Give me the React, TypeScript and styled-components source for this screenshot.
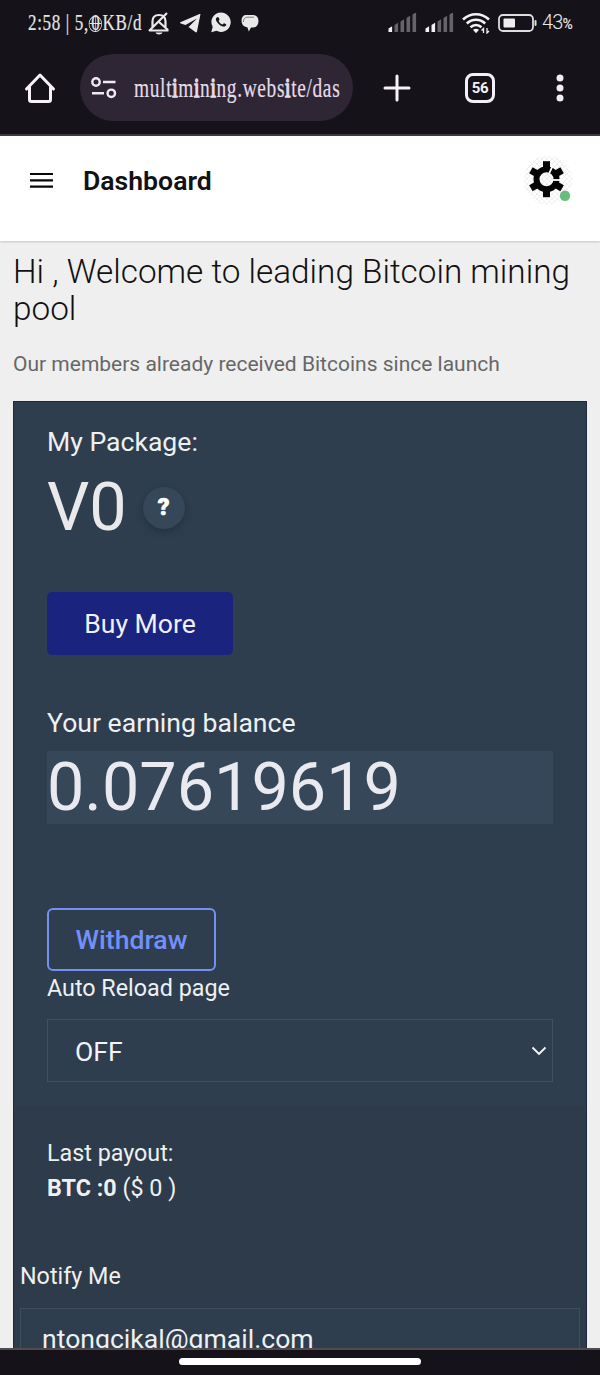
import React from "react";
import styled, { createGlobalStyle } from "styled-components";

const GlobalStyle = createGlobalStyle`
  * { box-sizing: border-box; }
  html, body { margin: 0; padding: 0; background: #efefef; }
  body { font-family: Roboto, "Liberation Sans", sans-serif; }
`;

const Screen = styled.div`
  width: 600px;
  height: 1375px;
  display: flex;
  flex-direction: column;
  overflow: hidden;
  background: #efefef;
`;

const Chrome = styled.div`
  height: 136px;
  flex: none;
  background: #151219;
  border-bottom: 2px solid #3d3b40;
`;

const StatusBar = styled.div`
  height: 45px;
  padding: 0 28px;
  display: flex;
  align-items: center;
  justify-content: space-between;
`;

const StatusGroup = styled.div<{ $gap: number }>`
  display: flex;
  align-items: center;
  gap: ${(p) => p.$gap}px;
`;

const NarrowBox = styled.div<{ $width: number }>`
  width: ${(p) => p.$width}px;
  flex: none;
  white-space: nowrap;
`;

const NarrowText = styled.span<{ $size: number; $scale: number; $color: string }>`
  display: inline-block;
  transform: scaleX(${(p) => p.$scale});
  transform-origin: left center;
  font-family: "Liberation Serif", serif;
  font-size: ${(p) => p.$size}px;
  line-height: 30px;
  letter-spacing: 0.9px;
  color: ${(p) => p.$color};
  -webkit-text-stroke: 0.2px ${(p) => p.$color};
`;

const Ornate = styled.span`
  -webkit-text-stroke: 1.5px #e6dbe8;
`;

const OrnateZero = styled.span`
  position: relative;
  margin: 0 3px;
  &::after {
    content: "";
    position: absolute;
    left: -3px;
    right: -2px;
    top: 6px;
    height: 14px;
    border: 1px solid #e5e5e5;
    border-radius: 50%;
    background: linear-gradient(#e5e5e5, #e5e5e5) center / 100% 1px no-repeat,
      linear-gradient(#e5e5e5, #e5e5e5) center / 1px 100% no-repeat;
  }
`;

const BatteryLabel = styled.div`
  display: flex;
  align-items: baseline;
  font: 300 20px/30px Roboto, sans-serif;
  letter-spacing: -0.8px;
  color: #e9e9e9;
  small {
    font-size: 14px;
    font-weight: 500;
  }
`;

const Toolbar = styled.div`
  height: 89px;
  padding: 9px 18px 0 24px;
  display: flex;
  align-items: flex-start;
`;

const ToolSlot = styled.div<{ $width: number }>`
  width: ${(p) => p.$width}px;
  height: 67px;
  display: flex;
  align-items: center;
  justify-content: center;
  flex: none;
`;

const AddressPill = styled.div`
  width: 273px;
  height: 67px;
  margin-left: 24px;
  margin-right: 22px;
  padding-left: 11px;
  border-radius: 34px;
  background: #2e2635;
  display: flex;
  align-items: center;
  gap: 17px;
  flex: none;
`;

const TabCount = styled.div`
  width: 30px;
  height: 30px;
  border: 3px solid #f5eff7;
  border-radius: 8px;
  display: flex;
  align-items: center;
  justify-content: center;
  font: 700 15px/24px Roboto, sans-serif;
  letter-spacing: -0.3px;
  color: #f5eff7;
`;

const PageHeader = styled.header`
  height: 105px;
  flex: none;
  padding: 0 24px 15px 30px;
  display: flex;
  align-items: center;
  background: #fff;
  box-shadow: 0 1px 2px rgba(0, 0, 0, 0.18);
  z-index: 1;
`;

const HeaderTitle = styled.div`
  margin-left: 30px;
  flex: 1;
  font-size: 26.6px;
  font-weight: 600;
  line-height: 30px;
  color: #111213;
`;

const Main = styled.main`
  flex: 1;
  min-height: 0;
  overflow: hidden;
  padding: 12px 13px 0;
`;

const Welcome = styled.h1`
  margin: 0;
  font-size: 33.3px;
  font-weight: 300;
  line-height: 37px;
  color: #111;
`;

const Lead = styled.p`
  margin: 22px 0 0;
  font-size: 21px;
  line-height: 30px;
  color: #676767;
`;

const Card = styled.section`
  height: 980px;
  margin-top: 22px;
  border: 1px solid #1c2b3b;
  background: #2f3e4e;
`;

const PackagePanel = styled.div`
  height: 704px;
  padding: 24px 33px 0;
`;

const PayoutPanel = styled.div`
  height: 275px;
  background: #2d3b4a;
  padding-top: 30px;
`;

const Label = styled.div<{ $size: number; $line: number }>`
  font-size: ${(p) => p.$size}px;
  line-height: ${(p) => p.$line}px;
  color: #eef0f2;
`;

const PackageRow = styled.div`
  height: 90px;
  padding-top: 7px;
  display: flex;
  align-items: center;
  gap: 18px;
`;

const BigValue = styled.div`
  font-size: 66.5px;
  line-height: 72px;
  color: #e9e9ec;
`;

const HelpButton = styled.button`
  width: 42px;
  height: 42px;
  margin: 3px 0 0 -2px;
  padding: 0;
  border: 0;
  border-radius: 50%;
  background: #36475a;
  box-shadow: 0 3px 7px rgba(10, 20, 30, 0.3);
  color: #fff;
  font: 900 23px/42px Roboto, sans-serif;
  -webkit-text-stroke: 0.7px #fff;
`;

const BuyButton = styled.button`
  display: block;
  width: 186px;
  height: 63px;
  margin-top: 44px;
  padding: 0;
  border: 0;
  border-radius: 5px;
  background: #1a237e;
  color: #eff0f8;
  font: 400 26.6px/63px Roboto, sans-serif;
`;

const BalanceBlock = styled.div`
  margin-top: 52px;
`;

const Balance = styled.div`
  height: 73px;
  margin-top: 12px;
  background: #36475a;
  font-size: 66.5px;
  line-height: 73px;
  color: #e9e9ef;
`;

const WithdrawButton = styled.button`
  display: block;
  width: 169px;
  height: 63px;
  margin-top: 84px;
  padding: 0;
  border: 2px solid #7491f2;
  border-radius: 6px;
  background: transparent;
  color: #7390fa;
  font: 500 26.6px/58px Roboto, sans-serif;
`;

const Select = styled.div`
  height: 63px;
  margin-top: 13px;
  padding: 1px 5px 0 27px;
  border: 1.5px solid #425161;
  display: flex;
  align-items: center;
  justify-content: space-between;
  font-size: 26.6px;
  color: #f3f4f5;
`;

const Payout = styled.div`
  padding-left: 33px;
`;

const Notify = styled.div`
  margin-top: 53px;
  padding: 0 6px;
`;

const EmailField = styled.div`
  height: 64px;
  margin-top: 14px;
  padding-left: 21px;
  border: 1.5px solid #3f4e5d;
  background: #2f3e4e;
  font-size: 26.6px;
  line-height: 60px;
  color: #eef0f2;
`;

const GestureBar = styled.footer`
  height: 27px;
  flex: none;
  border-top: 2px solid #504a51;
  background: #151219;
  display: flex;
  justify-content: center;
  align-items: flex-start;
  padding-top: 8px;
  z-index: 1;
`;

const Handle = styled.div`
  width: 242px;
  height: 7px;
  border-radius: 4px;
  background: #fff;
`;

const MutedBell = () => (
  <svg width="22" height="24" viewBox="0 0 22 24" fill="none" stroke="#e9e9e9" strokeWidth="2.2">
    <path d="M1.500 19.500h19M4.500 17v-6.500C4.500 6.500 7 4 11 4s6.500 2.500 6.500 6.500v5.500M19 2 1 20M11 11l9 8" />
    <path d="M7.500 21.500h7c-.6 2.500-6.400 2.500-7 0Z" fill="#e9e9e9" stroke="none" />
  </svg>
);

const Telegram = () => (
  <svg width="21" height="20" viewBox="0 0 21 20">
    <path d="M20.500 1 17 18.500c-.2 1-.9 1.200-1.700.6L8.500 14 17 5.500 5.500 12 .7 10.400c-1-.4-1-1 .2-1.500L19.500 1Z" fill="#e9e9e9" />
  </svg>
);

const WhatsApp = () => (
  <svg width="20" height="21" viewBox="0 0 20 21">
    <path d="M10 .5a9.600 9.600 0 0 0-8.300 14.400L.2 20.200l5.300-1.400A9.700 9.700 0 1 0 10 .5Z" fill="#e9e9e9" />
    <path d="M5.500 5.800c1.400-1.700 2.200-.7 2.900 1.400.3.800-.8 1.200-.7 1.700.8 1.700 2 2.800 3.800 3.500.5.200 1-1.400 1.700-1.200 2.300.9 2.700 1.500 1.300 2.700-1.600 1.400-3.900.5-6.300-1.500-2.600-2.300-4.300-4.800-2.700-6.600Z" fill="#151219" />
  </svg>
);

const Chat = () => (
  <svg width="18" height="18" viewBox="0 0 18 18" fill="#e9e9e9">
    <path d="M5.500 1H12c3.500 0 5.500 2.400 5.500 6S15.500 13.500 12 13.500h-2L7.800 17.500 6.500 13.500C2.500 12.500.6 10.500.6 6.500.6 3 2.500 1 5.500 1Z" />
    <path d="M2.500 8c0-3.600 1.500-4.800 4.500-4.800h6" fill="none" stroke="#151219" strokeWidth=".5" />
  </svg>
);

const Signal = ({ level }: { level: number }) => (
  <svg width="29" height="20" viewBox="0 0 29 20">
    {[0, 1, 2, 3, 4].map((i) => (
      <path
        key={i}
        d={`M${0.5 + i * 6} 19V${15.500 - i * 3.500}l3.600-2.200V19Z`}
        fill={i < level ? "#f2f2f2" : "#66646a"}
      />
    ))}
  </svg>
);

const Wifi = () => (
  <svg width="28" height="22" viewBox="0 0 28 22" fill="none" stroke="#f2f2f2" strokeWidth="2.700">
    <path d="M1 7.500C8.500.5 19.500.5 27 7.500M4.800 11.500c5.500-5 12.900-5 18.400 0M8.500 15.200c3.300-2.900 7.700-2.900 11 0" />
    <path d="M11 17.800q3-2 6 0l-3 3.500Z" fill="#f2f2f2" stroke="none" />
    <path d="M21.500 21v-4.500l-2 2M25 16v5l2-2" strokeWidth="1.300" />
  </svg>
);

const Battery = () => (
  <svg width="40" height="18" viewBox="0 0 40 18">
    <rect x="1" y="1" width="34" height="16" rx="4" fill="none" stroke="#dedede" strokeWidth="1.800" />
    <rect x="5.500" y="4.500" width="11.500" height="9" rx="1" fill="#ededed" />
    <rect x="36.500" y="6" width="2" height="6" rx="1" fill="#dedede" />
  </svg>
);

const Home = () => (
  <svg width="32" height="32" viewBox="0 0 32 32" fill="none" stroke="#f9f1fa" strokeWidth="3" strokeLinejoin="round" strokeLinecap="round">
    <path d="M2.500 17 16 3l13.500 14M5.500 15v12.500a2 2 0 0 0 2 2h17a2 2 0 0 0 2-2V15" />
  </svg>
);

const SiteControls = () => (
  <svg width="26" height="22" viewBox="0 0 26 22" fill="none" stroke="#f1e9f3" strokeWidth="2.400">
    <circle cx="5" cy="5" r="3.700" />
    <circle cx="20.300" cy="16.300" r="3.700" />
    <path d="M12 5h12.500M1 16.300h12" />
  </svg>
);

const Plus = () => (
  <svg width="28" height="28" viewBox="0 0 28 28" stroke="#f9f1fa" strokeWidth="3" strokeLinecap="round">
    <path d="M14 2v24M2 14h24" />
  </svg>
);

const Dots = () => (
  <svg width="8" height="28" viewBox="0 0 8 28" fill="#f4ebf5">
    <circle cx="4" cy="4" r="3.500" />
    <circle cx="4" cy="14" r="3.500" />
    <circle cx="4" cy="24" r="3.500" />
  </svg>
);

const Menu = () => (
  <svg width="23" height="18" viewBox="0 0 23 18" stroke="#080808" strokeWidth="2.200">
    <path d="M0 2h23M0 8.300h23M0 14.600h23" />
  </svg>
);

const Avatar = () => (
  <svg width="54" height="54" viewBox="0 0 54 54">
    <defs>
      <pattern id="hatch" width="5" height="5" patternUnits="userSpaceOnUse">
        <path d="M0 0 5 5M5 0 0 5" stroke="#e9e9e9" strokeWidth=".7" />
      </pattern>
    </defs>
    <circle cx="26" cy="26" r="24.500" fill="url(#hatch)" />
    <g transform="translate(24.500 25.200)">
      <circle r="10" fill="none" stroke="#050505" strokeWidth="6" />
      {[0, 60, 120, 180, 240, 300].map((angle) => (
        <rect key={angle} x="-3.500" y="-18" width="7" height="7" fill="#050505" transform={`rotate(${angle})`} />
      ))}
      <path d="M6 .8h12" stroke="#fff" strokeWidth="1.800" />
      <path d="M2.800-6 6.500-14" stroke="#fff" strokeWidth="1.800" />
    </g>
    <circle cx="43" cy="41.700" r="5.200" fill="#68bd7d" />
  </svg>
);

const Chevron = () => (
  <svg width="16" height="10" viewBox="0 0 16 10" fill="none" stroke="#f7f7f7" strokeWidth="1.800">
    <path d="m1.500 1.500 6.500 6.500 6.500-6.500" />
  </svg>
);

export default function App() {
  return (
    <>
      <GlobalStyle />
      <Screen>
        <Chrome>
          <StatusBar>
            <StatusGroup $gap={10}>
              <NarrowBox $width={110}>
                <NarrowText $size={23} $scale={0.74} $color="#e5e5e5">
                  2:58 | 5,<OrnateZero>0</OrnateZero>KB/d
                </NarrowText>
              </NarrowBox>
              <MutedBell />
              <Telegram />
              <WhatsApp />
              <Chat />
            </StatusGroup>
            <StatusGroup $gap={8}>
              <Signal level={1} />
              <Signal level={2} />
              <Wifi />
              <StatusGroup $gap={4}>
                <Battery />
                <BatteryLabel>43<small>%</small></BatteryLabel>
              </StatusGroup>
            </StatusGroup>
          </StatusBar>
          <Toolbar>
            <ToolSlot $width={32}><Home /></ToolSlot>
            <AddressPill>
              <SiteControls />
              <NarrowBox $width={208}>
                <NarrowText $size={27} $scale={0.719} $color="#e6dbe8">
                  mult<Ornate>i</Ornate>m<Ornate>i</Ornate>n<Ornate>i</Ornate>ng.webs<Ornate>i</Ornate>te/das
                </NarrowText>
              </NarrowBox>
            </AddressPill>
            <ToolSlot $width={44}><Plus /></ToolSlot>
            <ToolSlot $width={122}><TabCount>56</TabCount></ToolSlot>
            <ToolSlot $width={38}><Dots /></ToolSlot>
          </Toolbar>
        </Chrome>
        <PageHeader>
          <Menu />
          <HeaderTitle>Dashboard</HeaderTitle>
          <Avatar />
        </PageHeader>
        <Main>
          <Welcome>Hi , Welcome to leading Bitcoin mining pool</Welcome>
          <Lead>Our members already received Bitcoins since launch</Lead>
          <Card>
            <PackagePanel>
              <Label $size={26.6} $line={32}>My Package:</Label>
              <PackageRow>
                <BigValue>V0</BigValue>
                <HelpButton>?</HelpButton>
              </PackageRow>
              <BuyButton>Buy More</BuyButton>
              <BalanceBlock>
                <Label $size={26.6} $line={32}>Your earning balance</Label>
                <Balance>0.07619619</Balance>
              </BalanceBlock>
              <WithdrawButton>Withdraw</WithdrawButton>
              <Label $size={23.3} $line={35}>Auto Reload page</Label>
              <Select>OFF<Chevron /></Select>
            </PackagePanel>
            <PayoutPanel>
              <Payout>
                <Label $size={23.3} $line={35}>Last payout:</Label>
                <Label $size={23.3} $line={35}><b>BTC :0</b> ($ 0 )</Label>
              </Payout>
              <Notify>
                <Label $size={23.3} $line={35}>Notify Me</Label>
                <EmailField>ntongcikal@gmail.com</EmailField>
              </Notify>
            </PayoutPanel>
          </Card>
        </Main>
        <GestureBar><Handle /></GestureBar>
      </Screen>
    </>
  );
}
